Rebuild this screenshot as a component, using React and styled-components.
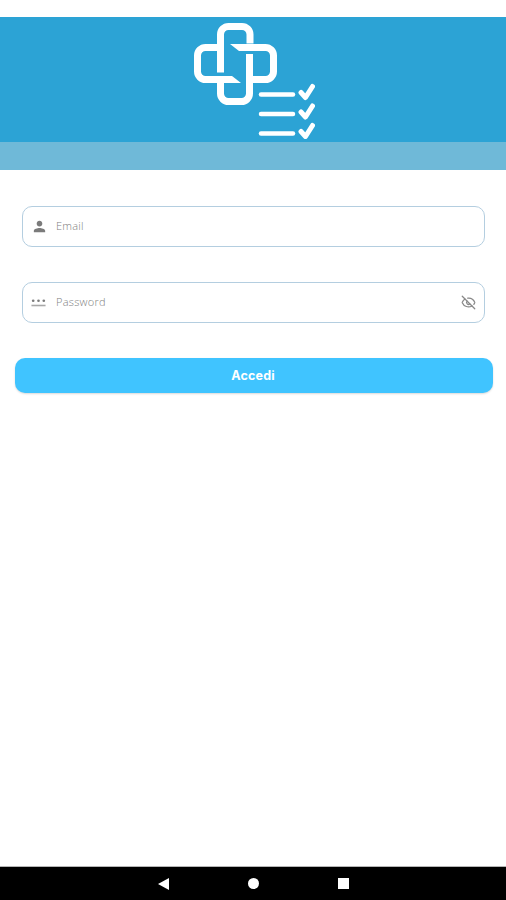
import React from 'react';
import styled, { createGlobalStyle } from 'styled-components';
import { EyeOff } from 'lucide-react';

const GlobalStyle = createGlobalStyle`
  html, body {
    margin: 0;
    padding: 0;
    background: #fff;
  }
  * {
    box-sizing: border-box;
  }
`;

const LogoIcon = () => (
  <LogoSvg width="130" height="125" viewBox="188 17 130 125" fill="none" stroke="#fff" strokeWidth="7">
    <path d="M249.500 43V34a8 8 0 0 0-8-8H228a8 8 0 0 0-8 8V72" transform="translate(0.500 0.500)" />
    <path d="M220 47.500H205.500a8 8 0 0 0-8 8V71.500a8 8 0 0 0 8 8H226" />
    <path d="M240 47.500H265.500a8 8 0 0 1 8 8V71.500a8 8 0 0 1-8 8H253" />
    <path d="M249.500 54V93.500a8 8 0 0 1-8 8H228.500a8 8 0 0 1-8-8V83" />
    <polygon points="230,44 241,44 241,51 239,51" fill="#fff" stroke="none" />
    <polygon points="225,76 232,76 241,83 225,83" fill="#fff" stroke="none" />
    <g strokeWidth="4.500" strokeLinecap="round">
      <path d="M261 94.500H293" />
      <path d="M261 114H293" />
      <path d="M261 133.500H293" />
    </g>
    <g strokeWidth="5" strokeLinecap="round" strokeLinejoin="round">
      <path d="M301 92.500l4.500 5 7-11" />
      <path d="M301 112l4.500 5 7-11" />
      <path d="M301 131.500l4.500 5 7-11" />
    </g>
  </LogoSvg>
);

const PersonIcon = () => (
  <svg width="17" height="17" viewBox="0 0 24 24" fill="#7b7b7b">
    <path d="M12 12c2.210 0 4-1.790 4-4s-1.790-4-4-4-4 1.790-4 4 1.790 4 4 4zm0 2c-2.670 0-8 1.340-8 4v2h16v-2c0-2.660-5.330-4-8-4z" />
  </svg>
);

const PasswordIcon = () => (
  <svg width="15" height="15" viewBox="0 0 17 17" fill="#7b7b7b">
    <circle cx="2.500" cy="6.500" r="1.500" />
    <circle cx="8.500" cy="6.500" r="1.500" />
    <circle cx="14.500" cy="6.500" r="1.500" />
    <rect x="0.500" y="11" width="16" height="1.800" fill="#a8a8a8" />
  </svg>
);

const App = () => {
  return (
    <>
      <GlobalStyle />
      <Page>
        <Header>
          <LogoBar>
            <LogoIcon />
          </LogoBar>
          <HeaderBand />
        </Header>
        <LoginForm>
          <Field>
            <FieldIcon>
              <PersonIcon />
            </FieldIcon>
            <FieldLabel>Email</FieldLabel>
          </Field>
          <Field>
            <FieldIcon>
              <PasswordIcon />
            </FieldIcon>
            <FieldLabel>Password</FieldLabel>
            <EyeOff size={15} color="#888" strokeWidth={2} />
          </Field>
          <SubmitButton type="button">Accedi</SubmitButton>
        </LoginForm>
        <NavBar>
          <BackIcon />
          <HomeIcon />
          <RecentIcon />
        </NavBar>
      </Page>
    </>
  );
};

const Page = styled.div`
  display: flex;
  flex-direction: column;
  width: 506px;
  height: 900px;
  padding-top: 17px;
  background: #fff;
  overflow: hidden;
`;

const Header = styled.header`
  display: flex;
  flex-direction: column;
`;

const LogoBar = styled.div`
  display: flex;
  justify-content: center;
  height: 125px;
  background: #2ca3d5;
`;

const LogoSvg = styled.svg`
  filter: blur(0.4px);
`;

const HeaderBand = styled.div`
  height: 28px;
  background: #6fb9d8;
`;

const LoginForm = styled.form`
  display: flex;
  flex-direction: column;
  align-items: flex-start;
  gap: 35px;
  padding: 36px 0 0 15px;
`;

const Field = styled.div`
  display: flex;
  align-items: center;
  width: 463px;
  height: 41px;
  margin-left: 7px;
  padding: 0 8px;
  border: 1px solid #b4cee0;
  border-radius: 10px;
  background: #fff;
`;

const FieldIcon = styled.span`
  display: flex;
  width: 17px;
  margin-right: 8px;
`;

const FieldLabel = styled.span`
  flex: 1;
  margin-top: -3px;
  font-family: "Open Sans", sans-serif;
  font-size: 11px;
  font-weight: 300;
  letter-spacing: 0.25px;
  color: #808080;
`;

const SubmitButton = styled.button`
  width: 478px;
  height: 35px;
  padding: 0 2px 1px 0;
  border: 0;
  border-radius: 10px;
  background: #40c4ff;
  box-shadow: 0 1px 2px rgba(0, 0, 0, 0.15);
  font-family: Inter, sans-serif;
  font-size: 12.5px;
  font-weight: 700;
  letter-spacing: 0.2px;
  color: #fff;
`;

const NavBar = styled.nav`
  display: flex;
  align-items: center;
  justify-content: center;
  gap: 79px;
  height: 33px;
  margin-top: auto;
  background: #000;
  box-shadow: 0 -1px 0 #b5b5b5;
`;

const BackIcon = styled.span`
  width: 0;
  height: 0;
  border-top: 6px solid transparent;
  border-bottom: 6px solid transparent;
  border-right: 11px solid #fff;
`;

const HomeIcon = styled.span`
  width: 11px;
  height: 11px;
  border-radius: 50%;
  background: #fff;
`;

const RecentIcon = styled.span`
  width: 11px;
  height: 11px;
  background: #fff;
`;

export default App;
